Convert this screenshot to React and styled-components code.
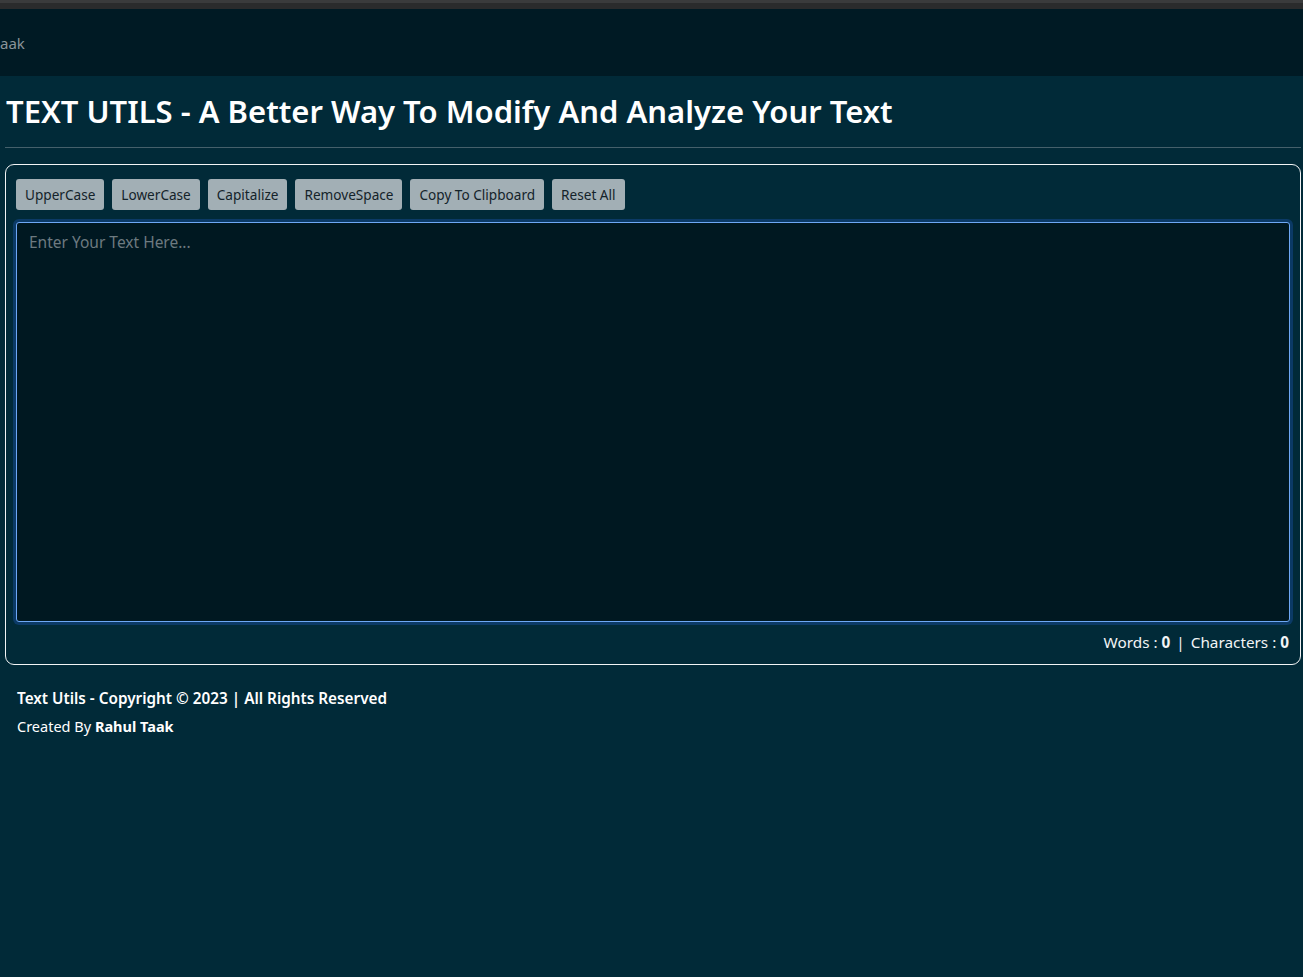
import { useState } from "react"
import styled, { createGlobalStyle } from "styled-components"

const GlobalStyle = createGlobalStyle`
    html, body {
        margin: 0;
        padding: 0;
        background-color: #012a38;
        font-family: "Noto Sans", "Open Sans", sans-serif;
    }
    * {
        box-sizing: border-box;
    }
`

const Page = styled.div`
    min-height: 977px;
    background-color: #012a38;
    overflow: hidden;
`

const TopStrip = styled.div`
    height: 9px;
    background-color: #2a2b2c;
    border-top: 3px solid #3a3b3c;
`

const Navbar = styled.nav`
    height: 67px;
    background-color: #001a24;
    display: flex;
    align-items: center;
`

const Brand = styled.span`
    color: #8a9499;
    font-size: 15px;
`

const Main = styled.main`
    padding: 0 2px 0 5px;
`

const Heading = styled.h1`
    margin: 0;
    padding: 14px 0 15px 1px;
    color: #ffffff;
    font-size: 31px;
    font-weight: 600;
    border-bottom: 1px solid #45606b;
`

const Panel = styled.section`
    margin-top: 16px;
    border: 1.5px solid #f2f4f5;
    border-radius: 9px;
    padding: 14px 10px 12px 10px;
`

const Toolbar = styled.div`
    display: flex;
    gap: 8px;
`

const ToolButton = styled.button`
    height: 31px;
    padding: 0 9px;
    border: none;
    border-radius: 3px;
    background-color: #a2afb5;
    color: #14232a;
    font-family: inherit;
    font-size: 13.6px;
    cursor: pointer;
`

const TextArea = styled.textarea`
    display: block;
    width: 100%;
    height: 400px;
    margin-top: 12px;
    padding: 8px 12px;
    border: 1px solid #6ea8f5;
    border-radius: 3px;
    box-shadow: 0 0 0 3px #0b3a66;
    background-color: #001821;
    color: #e6e6e6;
    font-family: inherit;
    font-size: 15.5px;
    resize: none;
    outline: none;

    &::placeholder {
        color: #6d7a80;
    }
`

const Counter = styled.div`
    display: flex;
    justify-content: flex-end;
    gap: 6px;
    margin-top: 10px;
    padding-right: 1px;
    color: #f2f4f5;
    font-size: 15.3px;

    & b {
        font-weight: 700;
    }
`

const Footer = styled.footer`
    padding: 23px 17px;
    color: #ffffff;
`

const Copyright = styled.p`
    margin: 0;
    font-size: 15.3px;
    font-weight: 600;
`

const Credit = styled.p`
    margin: 8px 0 0 0;
    font-size: 14.5px;

    & b {
        font-weight: 700;
    }
`

const tools = ["UpperCase", "LowerCase", "Capitalize", "RemoveSpace", "Copy To Clipboard", "Reset All"]

export default function App() {

    const [text, setText] = useState("")

    const words = text.split(/\s+/).filter((w) => w.length > 0).length

    const handleTool = (name) => {
        if (name === "UpperCase") setText(text.toUpperCase())
        if (name === "LowerCase") setText(text.toLowerCase())
        if (name === "Capitalize") setText(text.replace(/\b\w/g, (c) => c.toUpperCase()))
        if (name === "RemoveSpace") setText(text.split(/\s+/).join(" ").trim())
        if (name === "Copy To Clipboard" && navigator.clipboard) navigator.clipboard.writeText(text)
        if (name === "Reset All") setText("")
    }

    return (
        <>
            <GlobalStyle />
            <Page>
                <TopStrip />
                <Navbar>
                    <Brand>aak</Brand>
                </Navbar>
                <Main>
                    <Heading>TEXT UTILS - A Better Way To Modify And Analyze Your Text</Heading>
                    <Panel>
                        <Toolbar>
                            {tools.map((name) => (
                                <ToolButton key={name} onClick={() => handleTool(name)}>{name}</ToolButton>
                            ))}
                        </Toolbar>
                        <TextArea
                            placeholder="Enter Your Text Here..."
                            value={text}
                            onChange={(ev) => setText(ev.target.value)}
                        />
                        <Counter>
                            <span>Words : <b>{words}</b></span>
                            <span>|</span>
                            <span>Characters : <b>{text.length}</b></span>
                        </Counter>
                    </Panel>
                </Main>
                <Footer>
                    <Copyright>Text Utils - Copyright © 2023 | All Rights Reserved</Copyright>
                    <Credit>Created By <b>Rahul Taak</b></Credit>
                </Footer>
            </Page>
        </>
    )
}
